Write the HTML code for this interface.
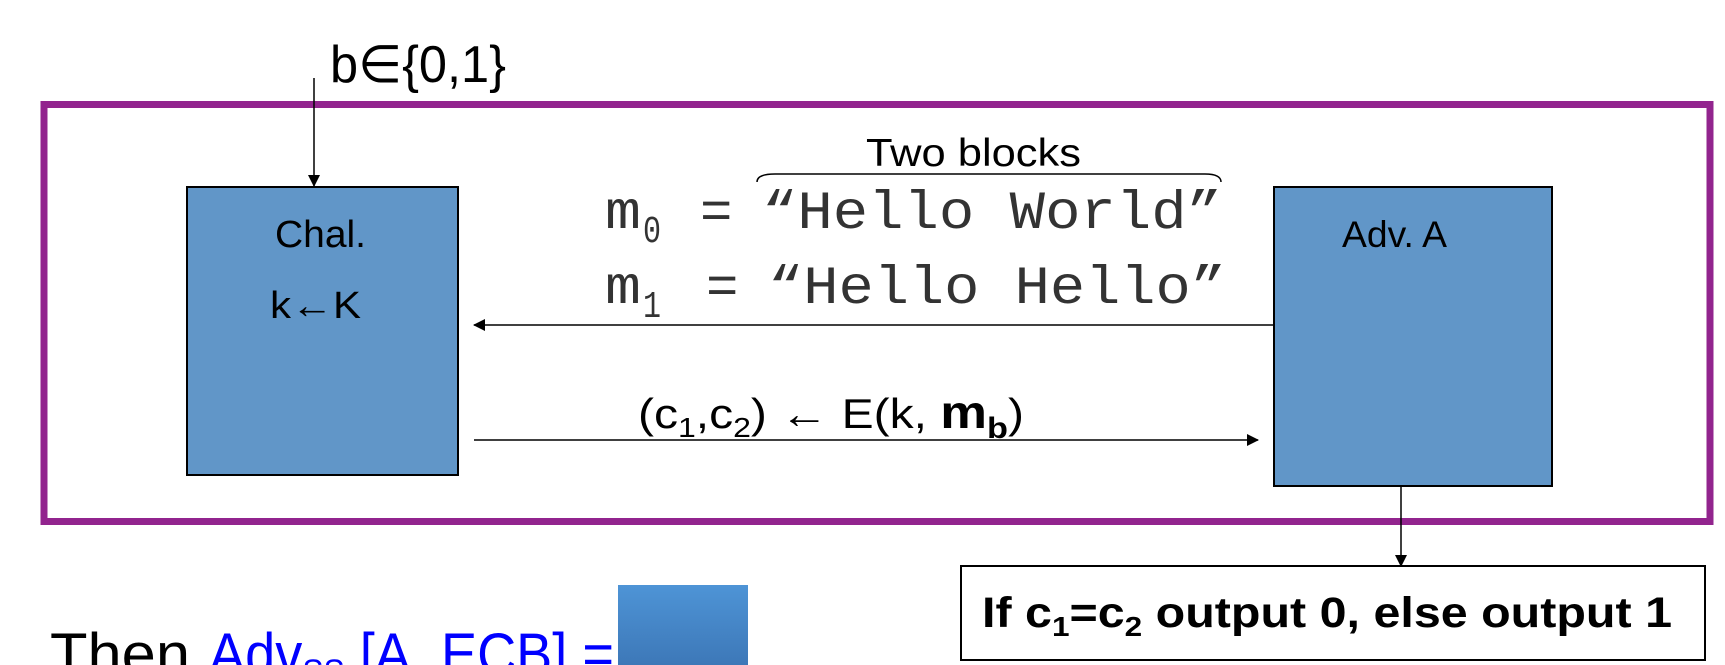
<!DOCTYPE html>
<html><head><style>
html,body{margin:0;padding:0;background:#fff;width:1725px;height:665px;overflow:hidden}
svg{display:block}
.s{font-family:"Liberation Sans",sans-serif}
.m{font-family:"Liberation Mono",monospace}
</style></head><body>
<svg width="1725" height="665" viewBox="0 0 1725 665" xmlns="http://www.w3.org/2000/svg">
<defs>
<marker id="ah" markerWidth="12" markerHeight="12" refX="11" refY="6" orient="auto" markerUnits="userSpaceOnUse">
<path d="M0,0 L12,6 L0,12 Z" fill="#000"/></marker>
<linearGradient id="g" x1="0" y1="0" x2="0" y2="1"><stop offset="0" stop-color="#4e94d6"/><stop offset="1" stop-color="#3d78b8"/></linearGradient>
</defs>
<rect x="44" y="104.5" width="1666" height="417" fill="none" stroke="#92248e" stroke-width="7"/>
<text x="330" y="82" class="s" font-size="52" textLength="176" lengthAdjust="spacingAndGlyphs">b∈{0,1}</text>
<line x1="314" y1="78" x2="314" y2="186" stroke="#000" stroke-width="1.5" marker-end="url(#ah)"/>
<rect x="187" y="187" width="271" height="288" fill="#6196c8" stroke="#000" stroke-width="2"/>
<text x="275" y="247" class="s" font-size="38" textLength="91" lengthAdjust="spacingAndGlyphs">Chal.</text>
<text x="270" y="318" class="s" font-size="38" textLength="91" lengthAdjust="spacingAndGlyphs">k←K</text>
<rect x="1274" y="187" width="278" height="299" fill="#6196c8" stroke="#000" stroke-width="2"/>
<text x="1342" y="247" class="s" font-size="37" textLength="105" lengthAdjust="spacingAndGlyphs">Adv.  A</text>
<text x="866" y="166" class="s" font-size="39" textLength="215" lengthAdjust="spacingAndGlyphs">Two blocks</text>
<path d="M757,182 Q757,174 775,174 L1205,174 Q1221,174 1221,182" fill="none" stroke="#000" stroke-width="1.5"/>
<text x="605" y="228" class="m" font-size="54" fill="#333" textLength="36" lengthAdjust="spacingAndGlyphs">m</text>
<text x="643" y="242" class="m" font-size="38" fill="#333" textLength="18" lengthAdjust="spacingAndGlyphs">0</text>
<text x="700" y="228" class="m" font-size="54" fill="#333">=</text>
<text x="762" y="228" class="m" font-size="54" fill="#333" textLength="460" lengthAdjust="spacingAndGlyphs">“Hello  World”</text>
<text x="605" y="303" class="m" font-size="54" fill="#333" textLength="36" lengthAdjust="spacingAndGlyphs">m</text>
<text x="643" y="317" class="m" font-size="38" fill="#333" textLength="18" lengthAdjust="spacingAndGlyphs">1</text>
<text x="706" y="303" class="m" font-size="54" fill="#333">=</text>
<text x="768" y="303" class="m" font-size="54" fill="#333" textLength="458" lengthAdjust="spacingAndGlyphs">“Hello  Hello”</text>
<line x1="1274" y1="325" x2="474" y2="325" stroke="#000" stroke-width="1.5" marker-end="url(#ah)"/>
<line x1="474" y1="440" x2="1258" y2="440" stroke="#000" stroke-width="1.5" marker-end="url(#ah)"/>
<text x="638" y="428" class="s" font-size="42" textLength="386" lengthAdjust="spacingAndGlyphs">(c<tspan font-size="28" dy="9">1</tspan><tspan dy="-9">,c</tspan><tspan font-size="28" dy="9">2</tspan><tspan dy="-9">) ← E(k, </tspan><tspan font-weight="bold" font-size="46">m</tspan><tspan font-weight="bold" font-size="30" dy="10">b</tspan><tspan dy="-10">)</tspan></text>
<line x1="1401" y1="486" x2="1401" y2="566" stroke="#000" stroke-width="1.5" marker-end="url(#ah)"/>
<rect x="961" y="566" width="744" height="94" fill="#fff" stroke="#000" stroke-width="2"/>
<text x="982" y="627" class="s" font-size="43" font-weight="bold" textLength="690" lengthAdjust="spacingAndGlyphs">If  c<tspan font-size="28" dy="9">1</tspan><tspan dy="-9">=c</tspan><tspan font-size="28" dy="9">2</tspan><tspan dy="-9"> output 0,  else output 1</tspan></text>
<text x="50" y="674" class="s" font-size="58" textLength="140" lengthAdjust="spacingAndGlyphs">Then</text>
<text x="209" y="674" class="s" font-size="58" fill="#0000ff" textLength="405" lengthAdjust="spacingAndGlyphs">Adv<tspan font-size="34" dy="9">SS</tspan><tspan dy="-9"> [A, ECB] =</tspan></text>
<rect x="618" y="585" width="130" height="80" fill="url(#g)"/>
</svg>
</body></html>
